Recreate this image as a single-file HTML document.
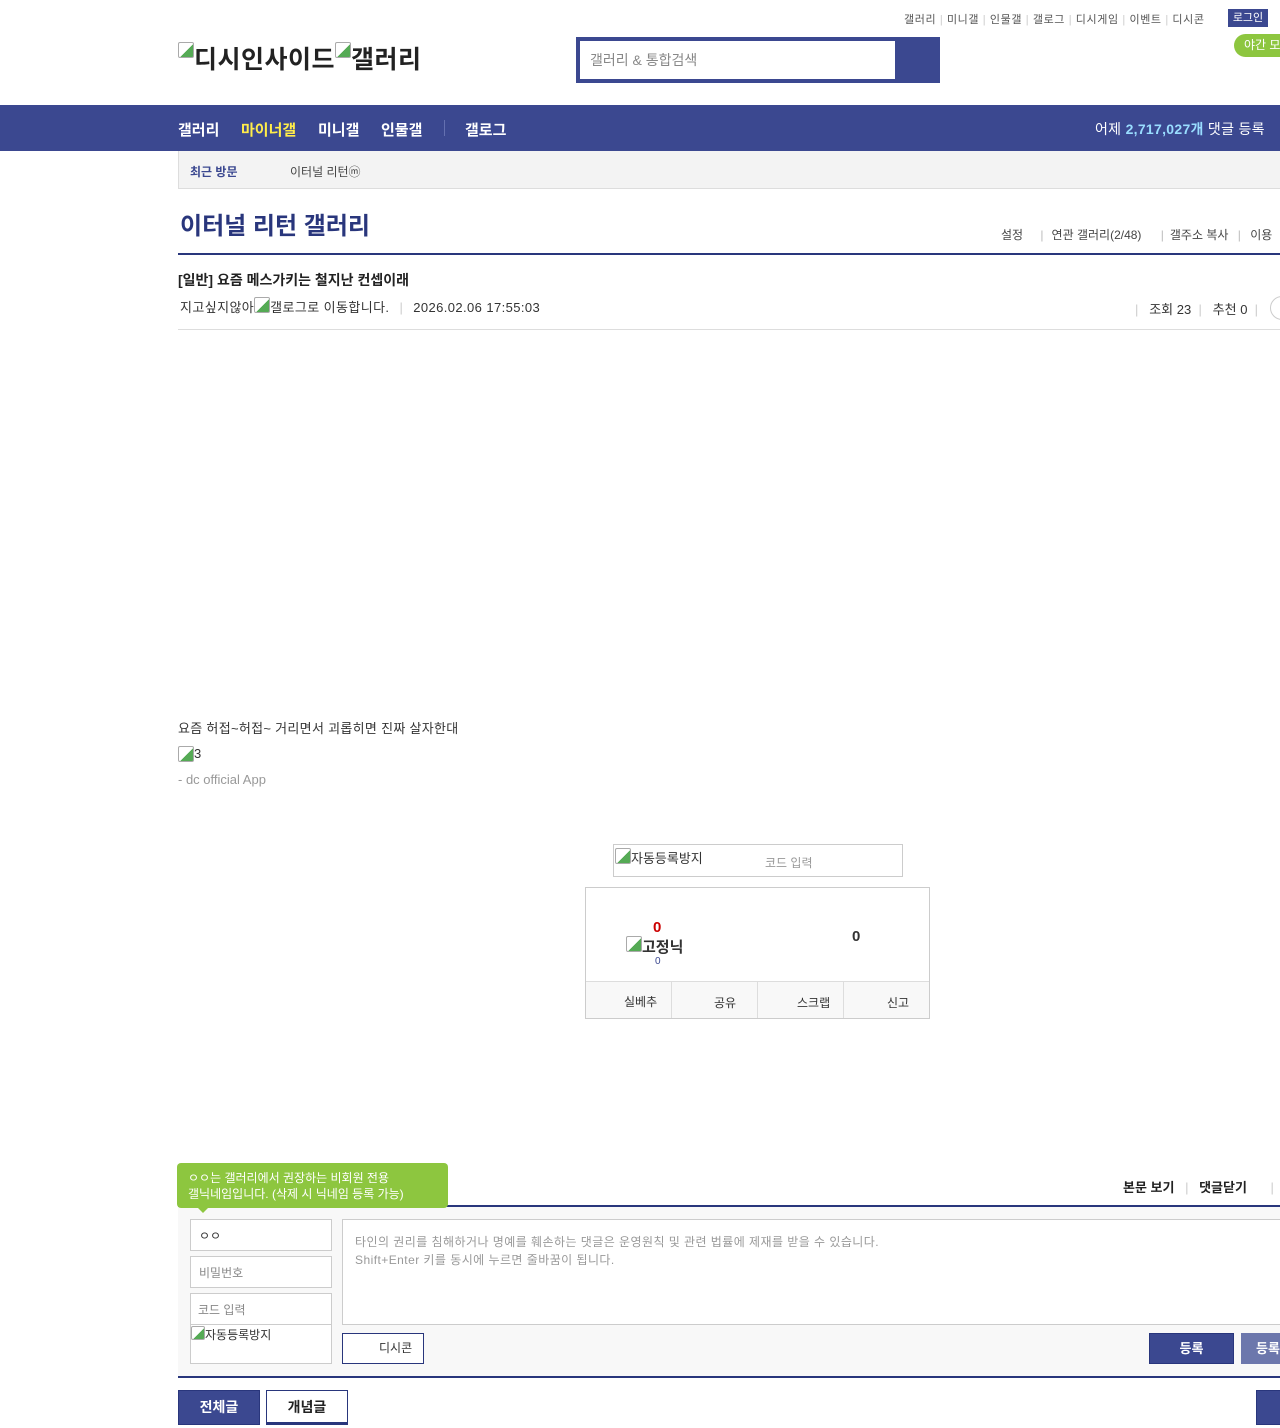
<!DOCTYPE html>
<html><head><meta charset="utf-8"><style>
*{margin:0;padding:0;box-sizing:border-box}
body{width:1280px;height:1428px;overflow:hidden;background:#fff;font-family:"Liberation Sans","Noto Sans CJK KR",sans-serif;color:#333;position:relative}
.a{position:absolute;white-space:nowrap}
.nav{background:#3b4890}
.btn{position:absolute;border:1px solid #29367c;font-weight:bold;text-align:center}
.ic{display:inline-block;width:16px;height:16px;border:1px solid #aaa;border-radius:2px;vertical-align:top;margin-top:0;background:linear-gradient(135deg,#fff 55%,#5a5 55%)}
</style></head><body>
<div class="a" style="left:904px;top:11px;font-size:11px;color:#555;letter-spacing:0.6px">갤러리 <span style="color:#ccc">|</span> 미니갤 <span style="color:#ccc">|</span> 인물갤 <span style="color:#ccc">|</span> 갤로그 <span style="color:#ccc">|</span> 디시게임 <span style="color:#ccc">|</span> 이벤트 <span style="color:#ccc">|</span> 디시콘</div>
<div class="a" style="left:1228px;top:9px;width:40px;height:18px;background:#3b4890;color:#fff;font-size:11px;text-align:center;line-height:18px">로그인</div>
<div class="a" style="left:1234px;top:34px;width:60px;height:23px;background:#8dc63f;border-radius:12px;color:#fff;font-size:12px;line-height:23px;padding-left:10px">야간 모</div>
<div class="a" style="left:178px;top:40px;font-size:25px;font-weight:bold;color:#222;letter-spacing:0.5px"><span class="ic" style="margin-top:2px"></span>디시인사이드<span class="ic" style="margin-top:2px"></span>갤러리</div>
<div class="a" style="left:576px;top:37px;width:364px;height:46px;background:#3b4890"></div>
<div class="a" style="left:580px;top:41px;width:315px;height:38px;background:#fff;font-size:14px;color:#888;line-height:38px;padding-left:10px">갤러리 &amp; 통합검색</div>
<div class="a nav" style="left:0;top:105px;width:1280px;height:46px"></div>
<div class="a" style="left:178px;top:119px;font-size:15px;font-weight:bold;color:#fff">갤러리</div>
<div class="a" style="left:241px;top:119px;font-size:15px;font-weight:bold;color:#ffed4a">마이너갤</div>
<div class="a" style="left:318px;top:119px;font-size:15px;font-weight:bold;color:#fff">미니갤</div>
<div class="a" style="left:381px;top:119px;font-size:15px;font-weight:bold;color:#fff">인물갤</div>
<div class="a" style="left:444px;top:120px;width:1px;height:16px;background:#6470b0"></div>
<div class="a" style="left:465px;top:119px;font-size:15px;font-weight:bold;color:#fff">갤로그</div>
<div class="a" style="left:1095px;top:119px;font-size:14px;color:#fff;letter-spacing:0.3px">어제 <b style="color:#9df">2,717,027개</b> 댓글 등록</div>
<div class="a" style="left:178px;top:151px;width:1110px;height:38px;background:#f3f3f3;border:1px solid #ddd;border-top:0"></div>
<div class="a" style="left:190px;top:163px;font-size:12px;font-weight:bold;color:#3b4890">최근 방문</div>
<div class="a" style="left:290px;top:163px;font-size:12px;color:#444">이터널 리턴ⓜ</div>
<div class="a" style="left:180px;top:206px;font-size:24px;font-weight:bold;color:#29367c">이터널 리턴 갤러리</div>
<div class="a" style="left:1001px;top:226px;font-size:12px;color:#444">설정 <span style="color:#bbb;margin:0 8px 0 14px">|</span>연관 갤러리(2/48) <span style="color:#bbb;margin:0 6px 0 16px">|</span>갤주소 복사 <span style="color:#bbb;margin:0 6px">|</span> 이용</div>
<div class="a" style="left:178px;top:253px;width:1110px;height:2px;background:#29367c"></div>
<div class="a" style="left:178px;top:270px;font-size:14px;font-weight:bold;color:#222">[일반] 요즘 메스가키는 철지난 컨셉이래</div>
<div class="a" style="left:180px;top:297px;font-size:13px;color:#333;letter-spacing:0.4px">지고싶지않아<span class="ic"></span>갤로그로 이동합니다. <span style="color:#ccc;margin:0 6px">|</span> 2026.02.06 17:55:03</div>
<div class="a" style="left:1135px;top:299px;font-size:13px;color:#333"><span style="color:#ccc">|</span>&nbsp;&nbsp; 조회 23 &nbsp;<span style="color:#ccc">|</span>&nbsp;&nbsp; 추천 0 &nbsp;<span style="color:#ccc">|</span></div>
<div class="a" style="left:1270px;top:296px;width:24px;height:24px;border:1px solid #ccc;border-radius:12px"></div>
<div class="a" style="left:178px;top:329px;width:1110px;height:1px;background:#ddd"></div>
<div class="a" style="left:178px;top:718px;font-size:13px;color:#333;letter-spacing:0.3px">요즘 허접~허접~ 거리면서 괴롭히면 진짜 살자한대</div>
<div class="a" style="left:178px;top:746px;font-size:13px;color:#333"><span class="ic"></span>3</div>
<div class="a" style="left:178px;top:772px;font-size:13px;color:#999">- dc official App</div>
<div class="a" style="left:613px;top:844px;width:290px;height:33px;border:1px solid #ccc"></div>
<div class="a" style="left:615px;top:848px;font-size:13px;color:#333"><span class="ic"></span>자동등록방지</div>
<div class="a" style="left:765px;top:854px;font-size:12px;color:#999">코드 입력</div>
<div class="a" style="left:585px;top:887px;width:345px;height:132px;border:1px solid #ccc"></div>
<div class="a" style="left:586px;top:981px;width:343px;height:37px;background:#f8f8f8;border-top:1px solid #ddd"></div>
<div class="a" style="left:671px;top:982px;width:1px;height:36px;background:#ddd"></div>
<div class="a" style="left:757px;top:982px;width:1px;height:36px;background:#ddd"></div>
<div class="a" style="left:843px;top:982px;width:1px;height:36px;background:#ddd"></div>
<div class="a" style="left:624px;top:993px;font-size:12px">실베추</div>
<div class="a" style="left:714px;top:994px;font-size:12px">공유</div>
<div class="a" style="left:797px;top:994px;font-size:12px">스크랩</div>
<div class="a" style="left:887px;top:994px;font-size:12px">신고</div>
<div class="a" style="left:653px;top:919px;font-size:15px;font-weight:bold;color:#c00">0</div>
<div class="a" style="left:626px;top:936px;font-size:15px;font-weight:bold;color:#333"><span class="ic"></span>고정닉</div>
<div class="a" style="left:655px;top:956px;font-size:10px;color:#3b4890">0</div>
<div class="a" style="left:852px;top:928px;font-size:15px;font-weight:bold;color:#333">0</div>
<div class="a" style="left:1123px;top:1177px;font-size:13px;font-weight:bold;color:#222">본문 보기 <span style="color:#ccc;font-weight:normal;margin:0 7px">|</span> 댓글닫기 <span style="color:#ccc;font-weight:normal;margin-left:20px">|</span></div>
<div class="a" style="left:430px;top:1176px;font-size:14px;font-weight:bold">순</div>
<div class="a" style="left:178px;top:1205px;width:1110px;height:2px;background:#29367c"></div>
<div class="a" style="left:178px;top:1207px;width:1110px;height:169px;background:#f8f8f8"></div>
<div class="a" style="left:177px;top:1163px;width:271px;height:45px;background:#8dc63f;border-radius:4px;color:#fff;font-size:12px;line-height:16px;padding:7px 11px">ㅇㅇ는 갤러리에서 권장하는 비회원 전용<br>갤닉네임입니다. (삭제 시 닉네임 등록 가능)</div>
<div class="a" style="left:197px;top:1207px;border:6px solid transparent;border-top-color:#8dc63f;border-bottom:0"></div>
<div class="a" style="left:190px;top:1219px;width:142px;height:32px;border:1px solid #ccc;background:#fff;font-size:12px;padding:7px 8px;color:#333">ㅇㅇ</div>
<div class="a" style="left:190px;top:1256px;width:142px;height:32px;border:1px solid #ccc;background:#fff;font-size:12px;padding:7px 8px;color:#888">비밀번호</div>
<div class="a" style="left:190px;top:1293px;width:142px;height:71px;border:1px solid #ccc;background:#fff"></div>
<div class="a" style="left:191px;top:1324px;width:140px;height:1px;background:#ccc"></div>
<div class="a" style="left:198px;top:1301px;font-size:12px;color:#888">코드 입력</div>
<div class="a" style="left:191px;top:1326px;font-size:12px;color:#333"><span class="ic" style="width:14px;height:14px"></span>자동등록방지</div>
<div class="a" style="left:342px;top:1219px;width:950px;height:106px;border:1px solid #ccc;background:#fff;font-size:12px;color:#999;padding:13px 12px;line-height:18px;letter-spacing:0.45px">타인의 권리를 침해하거나 명예를 훼손하는 댓글은 운영원칙 및 관련 법률에 제재를 받을 수 있습니다.<br>Shift+Enter 키를 동시에 누르면 줄바꿈이 됩니다.</div>
<div class="a" style="left:342px;top:1333px;width:82px;height:31px;border:1px solid #29367c;background:#fff;font-size:12px;line-height:29px;padding-left:36px">디시콘</div>
<div class="btn" style="left:1149px;top:1333px;width:85px;height:31px;background:#3b4890;color:#fff;font-size:13px;line-height:29px">등록</div>
<div class="btn" style="left:1241px;top:1333px;width:60px;height:31px;background:#6c77ac;color:#fff;font-size:13px;line-height:29px;border-color:#6c77ac;text-align:left;padding-left:14px">등록</div>
<div class="a" style="left:178px;top:1376px;width:1110px;height:2px;background:#29367c"></div>
<div class="btn" style="left:178px;top:1390px;width:82px;height:35px;background:#3b4890;color:#fff;font-size:14px;line-height:33px">전체글</div>
<div class="btn" style="left:266px;top:1390px;width:82px;height:35px;background:#fff;color:#222;font-size:14px;line-height:33px;border-bottom-width:3px">개념글</div>
<div class="btn" style="left:1256px;top:1390px;width:60px;height:35px;background:#3b4890"></div>
</body></html>
